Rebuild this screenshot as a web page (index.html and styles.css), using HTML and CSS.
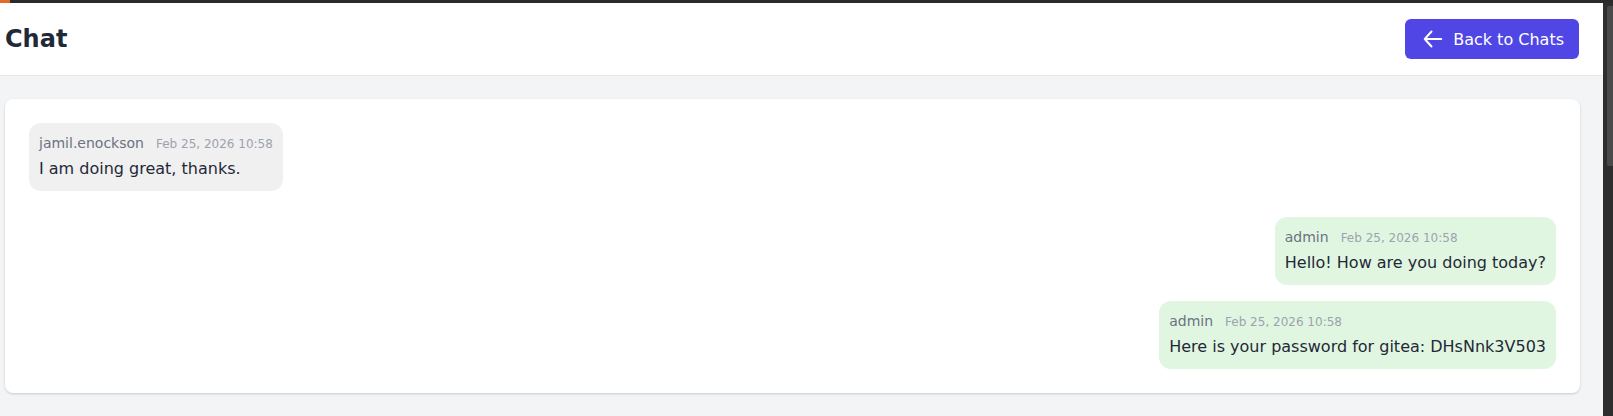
FILE: index.html
```html
<!DOCTYPE html>
<html lang="en">

<head>
	<meta charset="utf-8">
	<title>Chat</title>
	<link rel="stylesheet" href="styles.css">
</head>

<body>
	<div class="topbar"><span class="topbar-mark"></span></div>
	<div class="frame">
		<div class="page">
			<header class="header">
				<h1 class="title">Chat</h1>
				<a class="back-btn" href="#">
					<svg class="back-icon" viewBox="0 0 24 24" fill="none" stroke="currentColor" stroke-width="2"
						stroke-linecap="round" stroke-linejoin="round">
						<path d="M10.5 19.5 3.75 12l6.75-7.5M3.75 12h16.5" />
					</svg>
					<span>Back to Chats</span>
				</a>
			</header>

			<main class="main">
				<div class="card">
					<div class="msg msg-other">
						<div class="bubble">
							<div class="meta"><span class="author">jamil.enockson</span><span class="time">Feb 25, 2026 10:58</span></div>
							<div class="text">I am doing great, thanks.</div>
						</div>
					</div>
					<div class="msg msg-mine msg-first">
						<div class="bubble">
							<div class="meta"><span class="author">admin</span><span class="time">Feb 25, 2026 10:58</span></div>
							<div class="text">Hello! How are you doing today?</div>
						</div>
					</div>
					<div class="msg msg-mine">
						<div class="bubble">
							<div class="meta"><span class="author">admin</span><span class="time">Feb 25, 2026 10:58</span></div>
							<div class="text">Here is your password for gitea: DHsNnk3V503</div>
						</div>
					</div>
				</div>
			</main>
		</div>
		<div class="scrollbar"><div class="scroll-thumb"></div></div>
	</div>
</body>

</html>
```

FILE: styles.css
```css
html,
body {
	margin: 0;
	padding: 0;
}

body {
	background-color: #f3f4f6;
	font-family: "DejaVu Sans", Verdana, sans-serif;
	color: #1f2937;
	height: 100vh;
	overflow: hidden;
	display: flex;
	flex-direction: column;
}

.topbar {
	flex-shrink: 0;
	height: 3px;
	background-color: #2b2b2b;
	display: flex;
}

.topbar-mark {
	width: 10px;
	background-color: #e36a2c;
}

.frame {
	flex: 1;
	display: flex;
	min-height: 0;
}

.page {
	flex: 1;
	display: flex;
	flex-direction: column;
}

.scrollbar {
	flex-shrink: 0;
	width: 10px;
	background-color: #2e2e2e;
	display: flex;
	justify-content: flex-end;
	padding-top: 3px;
}

.scroll-thumb {
	width: 6px;
	height: 160px;
	background-color: #4a4a4a;
	border-radius: 2px 0 0 2px;
}

.header {
	flex-shrink: 0;
	height: 72px;
	background-color: #fff;
	border-bottom: 1px solid #e5e7eb;
	display: flex;
	align-items: center;
	justify-content: space-between;
	padding: 0 24px 0 5px;
}

.title {
	margin: 0;
	font-size: 24px;
	line-height: 32px;
	font-weight: bold;
	color: #1f2937;
}

.back-btn {
	display: flex;
	align-items: center;
	gap: 8px;
	height: 40px;
	padding: 0 15px 0 16px;
	box-sizing: border-box;
	background-color: #4f46e5;
	color: #fff;
	border-radius: 6px;
	font-size: 16px;
	text-decoration: none;
}

.back-icon {
	width: 24px;
	height: 24px;
}

.main {
	flex-shrink: 0;
	padding: 23px 23px 23px 5px;
}

.card {
	background-color: #fff;
	border-radius: 8px;
	box-shadow: 0 1px 3px rgba(0, 0, 0, 0.12), 0 1px 2px rgba(0, 0, 0, 0.06);
	padding: 24px;
	display: flex;
	flex-direction: column;
	gap: 16px;
}

.msg {
	display: flex;
}

.msg-mine {
	justify-content: flex-end;
}

.msg-first {
	margin-top: 10px;
}

.bubble {
	padding: 10px;
	border-radius: 12px;
}

.msg-other .bubble {
	background-color: #f0f0f0;
}

.msg-mine .bubble {
	background-color: #e1f6e1;
}

.meta {
	display: flex;
	align-items: baseline;
	height: 20px;
	line-height: 20px;
	margin-bottom: 4px;
}

.author {
	font-size: 14px;
	color: #6b7280;
}

.time {
	font-size: 12px;
	line-height: 16px;
	color: #9ca3af;
	margin-left: 12px;
}

.text {
	font-size: 16px;
	line-height: 24px;
	color: #1f2937;
}
```
